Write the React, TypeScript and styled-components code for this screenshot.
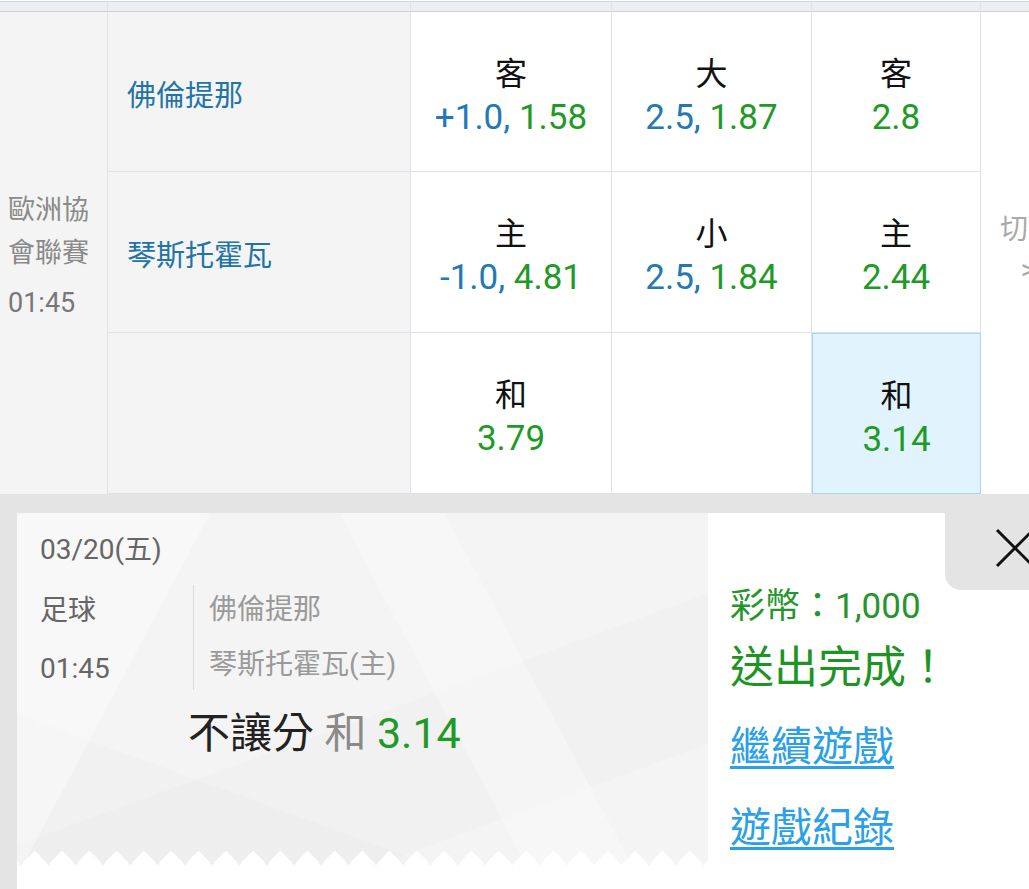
import React from "react";
import styled, { createGlobalStyle, css } from "styled-components";

const GlobalStyle = createGlobalStyle`
  html, body { margin: 0; padding: 0; background: #fff; }
  body { font-family: Roboto, "Noto Sans CJK TC", sans-serif; }
  * { box-sizing: border-box; }
`;

const LINE = "#dde3e8";
const BLUE = "#2479b5";
const GREEN = "#1f9a27";

const Page = styled.div`
  width: 1029px;
  height: 889px;
  overflow: hidden;
  display: flex;
  flex-direction: column;
  background: #fff;
`;

const Table = styled.div`
  display: grid;
  grid-template-columns: 108px 303px 201px 200px 169px 48px;
  grid-template-rows: 12px 160px 161px 161px;
  flex: 0 0 494px;
  overflow: hidden;
`;

const StripCell = styled.div<{ $last?: boolean }>`
  background: #eceff1;
  border-top: 1px solid #ccd8e3;
  border-bottom: 1px solid #c5d3e0;
  margin-top: 1px;
  border-right: ${(p) => (p.$last ? "none" : `1px solid ${LINE}`)};
`;

const LeagueCell = styled.div`
  grid-row: 2 / span 3;
  grid-column: 1;
  background: #f4f4f4;
  border-right: 1px solid ${LINE};
  display: flex;
  flex-direction: column;
  justify-content: center;
  padding: 7px 8px 0 8px;
`;

const LeagueName = styled.div`
  font-size: 27px;
  line-height: 43px;
  color: #8a8a8a;
`;

const LeagueTime = styled.div`
  font-size: 27px;
  line-height: 44px;
  margin-top: 6px;
  color: #777;
`;

const TeamCell = styled.div`
  grid-column: 2;
  background: #f4f4f4;
  border-right: 1px solid ${LINE};
  border-bottom: 1px solid ${LINE};
  display: flex;
  align-items: center;
  padding: 2px 0 0 19px;
  font-size: 29px;
  color: #2273a6;
`;

const OddsCell = styled.div<{ $highlight?: boolean }>`
  background: #fff;
  border-right: 1px solid ${LINE};
  border-bottom: 1px solid ${LINE};
  display: flex;
  flex-direction: column;
  align-items: center;
  justify-content: center;
  padding-top: 8px;
  ${(p) =>
    p.$highlight &&
    css`
      background: #e1f3fc;
      border: 1px solid #acd6ed;
    `}
`;

const OddsLabel = styled.div`
  font-size: 32px;
  line-height: 44px;
  color: #111;
`;

const OddsValue = styled.div`
  font-size: 35px;
  line-height: 44px;
  white-space: nowrap;
`;

const Blue = styled.span`
  color: ${BLUE};
`;

const Green = styled.span`
  color: ${GREEN};
`;

const SwitchCell = styled.div`
  grid-row: 2 / span 3;
  grid-column: 6;
  background: #fff;
  display: flex;
  flex-direction: column;
  align-items: flex-start;
  justify-content: center;
  padding: 0 0 6px 19px;
  color: #aaa;
  font-size: 28px;
  white-space: nowrap;
  overflow: hidden;
`;

const SwitchText = styled.div`
  width: 56px;
  text-align: center;
  line-height: 40px;
`;

const Overlay = styled.div`
  position: relative;
  flex: 1;
  background: #e4e4e4;
  padding: 19px 0 0 17px;
  display: flex;
`;

const Sheet = styled.div`
  flex: 1;
  background: #fff;
  display: flex;
  align-items: flex-start;
`;

const Ticket = styled.div`
  width: 691px;
  height: 352px;
  display: flex;
  flex-direction: column;
  background:
    linear-gradient(118deg, rgba(255, 255, 255, 0.35) 0 22%, transparent 22%),
    linear-gradient(62deg, transparent 0 58%, rgba(255, 255, 255, 0.3) 58% 70%, transparent 70%),
    linear-gradient(160deg, transparent 0 55%, rgba(0, 0, 0, 0.01) 55% 80%, transparent 80%),
    linear-gradient(20deg, rgba(0, 0, 0, 0.012) 0 25%, transparent 25%),
    #f4f4f4;
`;

const TicketBody = styled.div`
  flex: 1;
  padding: 19px 0 0 23px;
`;

const DateLine = styled.div`
  font-size: 28px;
  line-height: 36px;
  color: #666;
`;

const InfoRow = styled.div`
  display: flex;
  align-items: flex-start;
  margin-top: 14px;
`;

const MetaCol = styled.div`
  width: 153px;
  font-size: 28px;
  line-height: 58px;
  color: #666;
`;

const Divider = styled.div`
  width: 1px;
  height: 105px;
  margin-top: 3px;
  background: #d8d8d8;
`;

const TeamsCol = styled.div`
  padding-left: 15px;
  font-size: 28px;
  line-height: 55px;
  color: #9a9a9a;
`;

const PickLine = styled.div`
  margin: 10px 0 0 148px;
  font-size: 42px;
  line-height: 50px;
  white-space: nowrap;
`;

const PickType = styled.span`
  color: #222;
`;

const PickSide = styled.span`
  color: #8a8a8a;
`;

const PickOdds = styled.span`
  color: ${GREEN};
  font-size: 43px;
`;

const Zigzag = styled.div`
  height: 15px;
  flex: 0 0 15px;
  background: conic-gradient(from 138deg at 50% 0, #fff 84deg, transparent 0deg);
  background-size: 27.3px 15px;
  background-repeat: repeat-x;
  background-position: 4px 0;
`;

const Result = styled.div`
  display: flex;
  flex-direction: column;
  padding: 72px 0 0 22px;
`;

const Coins = styled.div`
  font-size: 35px;
  line-height: 44px;
  color: #26952c;
`;

const Done = styled.div`
  font-size: 44px;
  line-height: 54px;
  margin-top: 12px;
  color: #1d9424;
`;

const ActionLink = styled.a<{ $gap: number }>`
  font-size: 41px;
  line-height: 52px;
  margin-top: ${(p) => p.$gap}px;
  color: #2aa0e6;
  text-decoration: underline;
  text-decoration-thickness: 3px;
  text-underline-offset: 5px;
  cursor: pointer;
  align-self: flex-start;
`;

const CloseTab = styled.button`
  position: absolute;
  top: 0;
  right: 0;
  width: 84px;
  height: 96px;
  border: none;
  padding: 34px 0 0 50px;
  background: #e4e4e4;
  border-bottom-left-radius: 16px;
  display: flex;
  align-items: flex-start;
  justify-content: flex-start;
  cursor: pointer;
`;

const CloseIcon = styled.svg`
  flex: 0 0 auto;
  display: block;
`;

type Odd = { label: string; handicap?: string; odds: string };
type Row = { team: string; cells: (Odd | null)[] };

const rows: Row[] = [
  {
    team: "佛倫提那",
    cells: [
      { label: "客", handicap: "+1.0,", odds: "1.58" },
      { label: "大", handicap: "2.5,", odds: "1.87" },
      { label: "客", odds: "2.8" },
    ],
  },
  {
    team: "琴斯托霍瓦",
    cells: [
      { label: "主", handicap: "-1.0,", odds: "4.81" },
      { label: "小", handicap: "2.5,", odds: "1.84" },
      { label: "主", odds: "2.44" },
    ],
  },
  {
    team: "",
    cells: [{ label: "和", odds: "3.79" }, null, { label: "和", odds: "3.14" }],
  },
];

export default function App() {
  return (
    <>
      <GlobalStyle />
      <Page>
        <Table>
          {[0, 1, 2, 3, 4, 5].map((i) => (
            <StripCell key={`s${i}`} $last={i === 5} />
          ))}
          <LeagueCell>
            <LeagueName>歐洲協會聯賽</LeagueName>
            <LeagueTime>01:45</LeagueTime>
          </LeagueCell>
          {rows.map((row, r) => (
            <React.Fragment key={r}>
              <TeamCell style={{ gridRow: r + 2 }}>{row.team}</TeamCell>
              {row.cells.map((c, ci) => (
                <OddsCell
                  key={ci}
                  style={{ gridRow: r + 2, gridColumn: ci + 3 }}
                  $highlight={r === 2 && ci === 2}
                >
                  {c && (
                    <>
                      <OddsLabel>{c.label}</OddsLabel>
                      <OddsValue>
                        {c.handicap && <Blue>{c.handicap} </Blue>}
                        <Green>{c.odds}</Green>
                      </OddsValue>
                    </>
                  )}
                </OddsCell>
              ))}
            </React.Fragment>
          ))}
          <SwitchCell>
            <SwitchText>切換</SwitchText>
            <SwitchText>&gt;</SwitchText>
          </SwitchCell>
        </Table>

        <Overlay>
          <Sheet>
            <Ticket>
              <TicketBody>
                <DateLine>03/20(五)</DateLine>
                <InfoRow>
                  <MetaCol>
                    <div>足球</div>
                    <div>01:45</div>
                  </MetaCol>
                  <Divider />
                  <TeamsCol>
                    <div>佛倫提那</div>
                    <div>琴斯托霍瓦(主)</div>
                  </TeamsCol>
                </InfoRow>
                <PickLine>
                  <PickType>不讓分</PickType> <PickSide>和</PickSide>{" "}
                  <PickOdds>3.14</PickOdds>
                </PickLine>
              </TicketBody>
              <Zigzag />
            </Ticket>
            <Result>
              <Coins>彩幣：1,000</Coins>
              <Done>送出完成！</Done>
              <ActionLink $gap={26}>繼續遊戲</ActionLink>
              <ActionLink $gap={29}>遊戲紀錄</ActionLink>
            </Result>
          </Sheet>
          <CloseTab aria-label="close">
            <CloseIcon width="40" height="40" viewBox="0 0 40 40">
              <path d="M2 2 L38 38 M38 2 L2 38" stroke="#111" strokeWidth="3" fill="none" />
            </CloseIcon>
          </CloseTab>
        </Overlay>
      </Page>
    </>
  );
}
